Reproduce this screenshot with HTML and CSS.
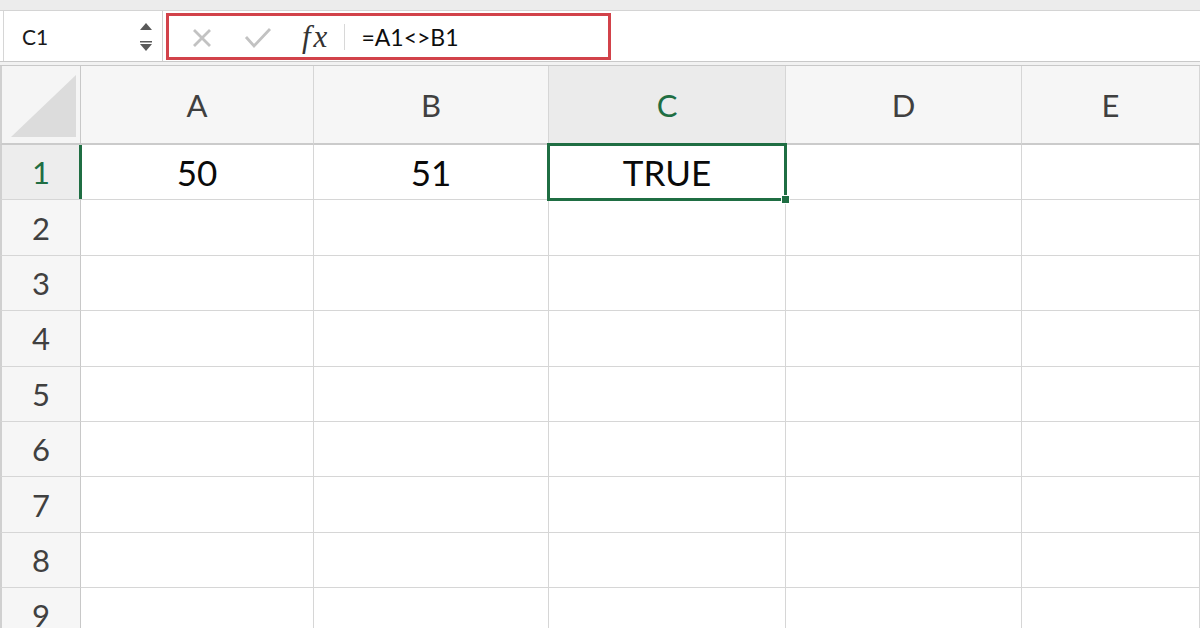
FILE: index.html
```html
<!DOCTYPE html>
<html lang="en">
<head>
    <meta charset="UTF-8">
    <title>Not equal formula</title>
    <link rel="stylesheet" href="styles.css">
</head>
<body>
    <div class="titlebar"></div>

    <div class="formula-bar">
        <div class="name-box">
            <span class="cell-ref">C1</span>
            <svg class="spinner" width="14" height="32" viewBox="0 0 14 32">
                <polygon points="1,9 7,2 13,9" fill="#595959"/>
                <rect x="1" y="20" width="12" height="1.5" fill="#595959"/>
                <polygon points="1,23 13,23 7,30" fill="#595959"/>
            </svg>
        </div>
        <div class="formula-box">
            <svg class="icon-cancel" width="20" height="20" viewBox="0 0 20 20">
                <path d="M2 2 L18 18 M18 2 L2 18" stroke="#c2c2c2" stroke-width="2.8" fill="none"/>
            </svg>
            <svg class="icon-enter" width="28" height="22" viewBox="0 0 28 22">
                <path d="M2 10 L10 19 L26 2" stroke="#c2c2c2" stroke-width="2.8" fill="none"/>
            </svg>
            <span class="fx">fx</span>
            <span class="formula">=A1&lt;&gt;B1</span>
        </div>
    </div>

    <div class="bar-divider"></div>

    <div class="sheet">
        <div class="corner">
            <svg width="66" height="63" viewBox="0 0 66 63">
                <polygon points="0,62 65,0 65,62" fill="#dcdcdc"/>
            </svg>
        </div>
        <div class="col-head">A</div>
        <div class="col-head">B</div>
        <div class="col-head active">C</div>
        <div class="col-head">D</div>
        <div class="col-head">E</div>

        <div class="row-head active">1</div>
        <div class="cell">50</div>
        <div class="cell">51</div>
        <div class="cell selected">TRUE</div>
        <div class="cell"></div>
        <div class="cell"></div>

        <div class="row-head">2</div>
        <div class="cell"></div><div class="cell"></div><div class="cell"></div><div class="cell"></div><div class="cell"></div>

        <div class="row-head">3</div>
        <div class="cell"></div><div class="cell"></div><div class="cell"></div><div class="cell"></div><div class="cell"></div>

        <div class="row-head">4</div>
        <div class="cell"></div><div class="cell"></div><div class="cell"></div><div class="cell"></div><div class="cell"></div>

        <div class="row-head">5</div>
        <div class="cell"></div><div class="cell"></div><div class="cell"></div><div class="cell"></div><div class="cell"></div>

        <div class="row-head">6</div>
        <div class="cell"></div><div class="cell"></div><div class="cell"></div><div class="cell"></div><div class="cell"></div>

        <div class="row-head">7</div>
        <div class="cell"></div><div class="cell"></div><div class="cell"></div><div class="cell"></div><div class="cell"></div>

        <div class="row-head">8</div>
        <div class="cell"></div><div class="cell"></div><div class="cell"></div><div class="cell"></div><div class="cell"></div>

        <div class="row-head">9</div>
        <div class="cell"></div><div class="cell"></div><div class="cell"></div><div class="cell"></div><div class="cell"></div>
    </div>
</body>
</html>
```

FILE: styles.css
```css
body {
    margin: 0;
    width: 1200px;
    height: 628px;
    overflow: hidden;
    background-color: #fff;
    font-family: Lato, "Open Sans", Arial, sans-serif;
    color: #111;
}

.titlebar {
    height: 10px;
    background-color: #ececec;
    border-bottom: 1px solid #d4d4d4;
}

/* formula bar */
.formula-bar {
    height: 50px;
    display: flex;
    background-color: #fff;
}

.name-box {
    width: 160px;
    margin-left: 3px;
    border-left: 1px solid #d6d6d6;
    border-right: 1px solid #cfcfcf;
    display: flex;
    align-items: center;
    justify-content: space-between;
    padding: 0 9px 0 18px;
    box-sizing: border-box;
}

.cell-ref {
    font-size: 21px;
    color: #1a1a1a;
}

.spinner {
    margin-top: 2px;
}

.formula-box {
    width: 445px;
    height: 47px;
    margin: 2px 0 0 3px;
    border: 3px solid #d2424a;
    box-sizing: border-box;
    display: flex;
    align-items: center;
    padding-left: 23px;
}

.icon-cancel {
    margin-top: 3px;
}

.icon-enter {
    margin-left: 32px;
    margin-top: 3px;
}

.fx {
    font-family: "Liberation Serif", "DejaVu Serif", serif;
    font-style: italic;
    font-size: 31px;
    letter-spacing: 3px;
    color: #333;
    margin-left: 30px;
    padding-right: 14px;
    border-right: 1px solid #d8d8d8;
    line-height: 26px;
}

.formula {
    font-size: 23px;
    color: #0d0d0d;
    margin-left: 16px;
}

.bar-divider {
    height: 3px;
    border-top: 1px solid #c9c9c9;
    border-bottom: 1px solid #c9c9c9;
    background-color: #f2f2f2;
}

/* sheet grid */
.sheet {
    display: grid;
    grid-template-columns: 81px 233px 235px 237px 236px 1fr;
    grid-template-rows: 79px repeat(9, 55.4px);
}

.corner,
.col-head,
.row-head,
.cell {
    box-sizing: border-box;
    border-right: 1.5px solid #d6d6d6;
    border-bottom: 1.5px solid #d6d6d6;
    display: flex;
    align-items: center;
    justify-content: center;
}

.corner {
    background-color: #f5f5f5;
    border-left: 2px solid #d0d0d0;
    border-right-color: #c8c8c8;
    border-bottom: 2px solid #cbcbcb;
    align-items: flex-end;
    justify-content: flex-end;
    padding: 0 3px 5px 0;
}

.col-head {
    background-color: #f6f6f6;
    border-bottom: 2px solid #cbcbcb;
    font-size: 31px;
    color: #404040;
}

.col-head.active {
    background-color: #ebebeb;
    color: #1f6e43;
}

.row-head {
    background-color: #f6f6f6;
    border-left: 2px solid #d0d0d0;
    border-right-color: #c8c8c8;
    font-size: 31px;
    color: #404040;
    position: relative;
}

.row-head.active {
    background-color: #ededed;
    color: #1f6e43;
}

.row-head.active::after {
    content: "";
    position: absolute;
    top: 0;
    bottom: 0;
    right: -2px;
    width: 3px;
    background-color: #1f6e43;
}

.cell {
    font-size: 35px;
    color: #0a0a0a;
}

.cell.selected {
    position: relative;
}

.cell.selected::before {
    content: "";
    position: absolute;
    top: -2px;
    left: -2px;
    right: -2px;
    bottom: -2px;
    border: 3px solid #1f6e43;
}

.cell.selected::after {
    content: "";
    position: absolute;
    right: -5px;
    bottom: -5px;
    width: 7px;
    height: 7px;
    background-color: #1f6e43;
    border: 1px solid #fff;
}
```
